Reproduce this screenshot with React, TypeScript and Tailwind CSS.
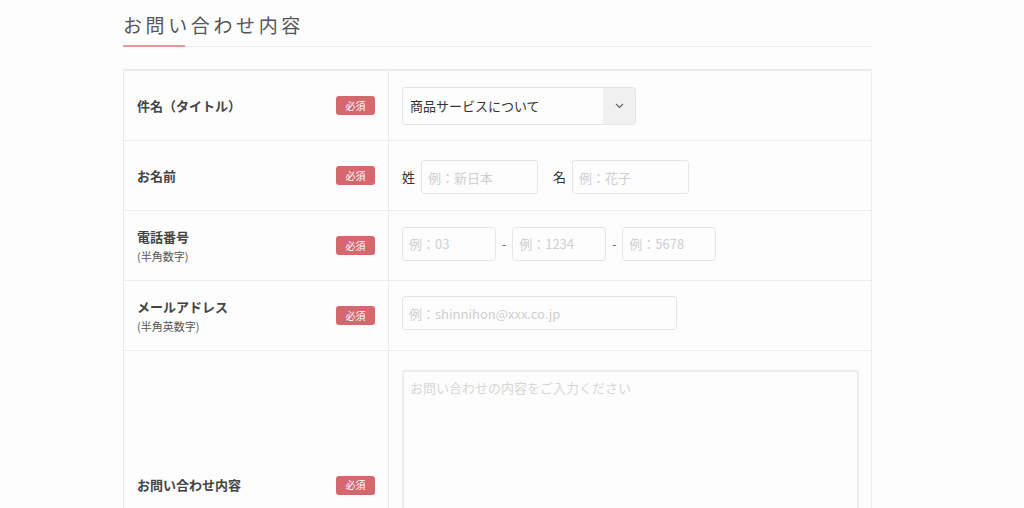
import { ReactNode } from "react";

const font = { fontFamily: '"Noto Sans CJK JP", "Noto Sans", sans-serif' };

function Badge() {
  return (
    <span className="flex h-[19px] w-[39px] items-center justify-center rounded-[3px] bg-[#d4686c] text-[10px] leading-none text-white">
      必須
    </span>
  );
}

function Row({
  label,
  note,
  children,
  cellClass = "py-4",
}: {
  label: string;
  note?: string;
  children: ReactNode;
  cellClass?: string;
}) {
  return (
    <div className="flex">
      <div className="flex w-[265px] shrink-0 items-center justify-between border-r border-b border-[#ececec] pr-[13px] pl-[13px]">
        <div>
          <p className="text-[13px] font-bold leading-[20px] text-[#444]">{label}</p>
          {note && <p className="text-[11px] leading-[18px] text-[#555]">{note}</p>}
        </div>
        <Badge />
      </div>
      <div className={`flex flex-1 items-center border-b border-[#ececec] pl-[13px] ${cellClass}`}>
        {children}
      </div>
    </div>
  );
}

function Field({ placeholder, className }: { placeholder: string; className: string }) {
  return (
    <input
      placeholder={placeholder}
      className={`h-[34px] rounded-[3px] border border-[#e6e6e6] bg-[#fdfdfd] px-[6px] text-[13px] text-[#333] outline-none placeholder:text-[#cfcfcf] ${className}`}
    />
  );
}

export default function App() {
  return (
    <div className="min-h-screen bg-[#fdfdfd]" style={font}>
      <div className="ml-[123px] w-[749px] pt-[11px]">
        <h2 className="text-[19px] leading-[28px] tracking-[0.19em] text-[#555]">お問い合わせ内容</h2>
        {/* heading rule with the short accent on the left */}
        <div className="mt-[6px] flex h-[2px] items-end">
          <div className="h-[2px] w-[62px] bg-[#e49a9a]" />
          <div className="h-px flex-1 bg-[#ebebeb]" />
        </div>

        <div className="mt-[22px] border-t-2 border-l border-r border-[#ececec]">
          <Row label="件名（タイトル）" cellClass="h-[70px]">
            <div className="flex h-[38px] w-[234px] overflow-hidden rounded-[3px] border border-[#e6e6e6]">
              <span className="flex flex-1 items-center pl-[7px] text-[13px] text-[#333]">商品サービスについて</span>
              <span className="flex w-[32px] items-center justify-center bg-[#f0f0f0]">
                <svg width="9" height="6" viewBox="0 0 9 6" fill="none" stroke="#666" strokeWidth="1.2">
                  <path d="M1 1l3.5 3.5L8 1" />
                </svg>
              </span>
            </div>
          </Row>

          <Row label="お名前" cellClass="h-[70px] pt-[3px]">
            <span className="mr-[6px] text-[13px] text-[#333]">姓</span>
            <Field placeholder="例：新日本" className="w-[117px]" />
            <span className="mr-[6px] ml-[15px] text-[13px] text-[#333]">名</span>
            <Field placeholder="例：花子" className="w-[117px]" />
          </Row>

          <Row label="電話番号" note="(半角数字)" cellClass="h-[70px] pb-[4px]">
            <Field placeholder="例：03" className="w-[94px]" />
            <span className="mx-[6px] text-[12px] text-[#555]">-</span>
            <Field placeholder="例：1234" className="w-[94px]" />
            <span className="mx-[6px] text-[12px] text-[#555]">-</span>
            <Field placeholder="例：5678" className="w-[94px]" />
          </Row>

          <Row label="メールアドレス" note="(半角英数字)" cellClass="h-[70px] pb-[5px]">
            <Field placeholder="例：shinnihon@xxx.co.jp" className="w-[275px]" />
          </Row>

          <Row label="お問い合わせ内容" cellClass="py-[19px]">
            <textarea
              placeholder="お問い合わせの内容をご入力ください"
              className="h-[230px] w-[457px] resize-none rounded-[3px] border-2 border-[#ececec] bg-[#fdfdfd] px-[6px] py-[6px] text-[13px] outline-none placeholder:text-[#d6d6d6]"
            />
          </Row>
        </div>
      </div>
    </div>
  );
}
